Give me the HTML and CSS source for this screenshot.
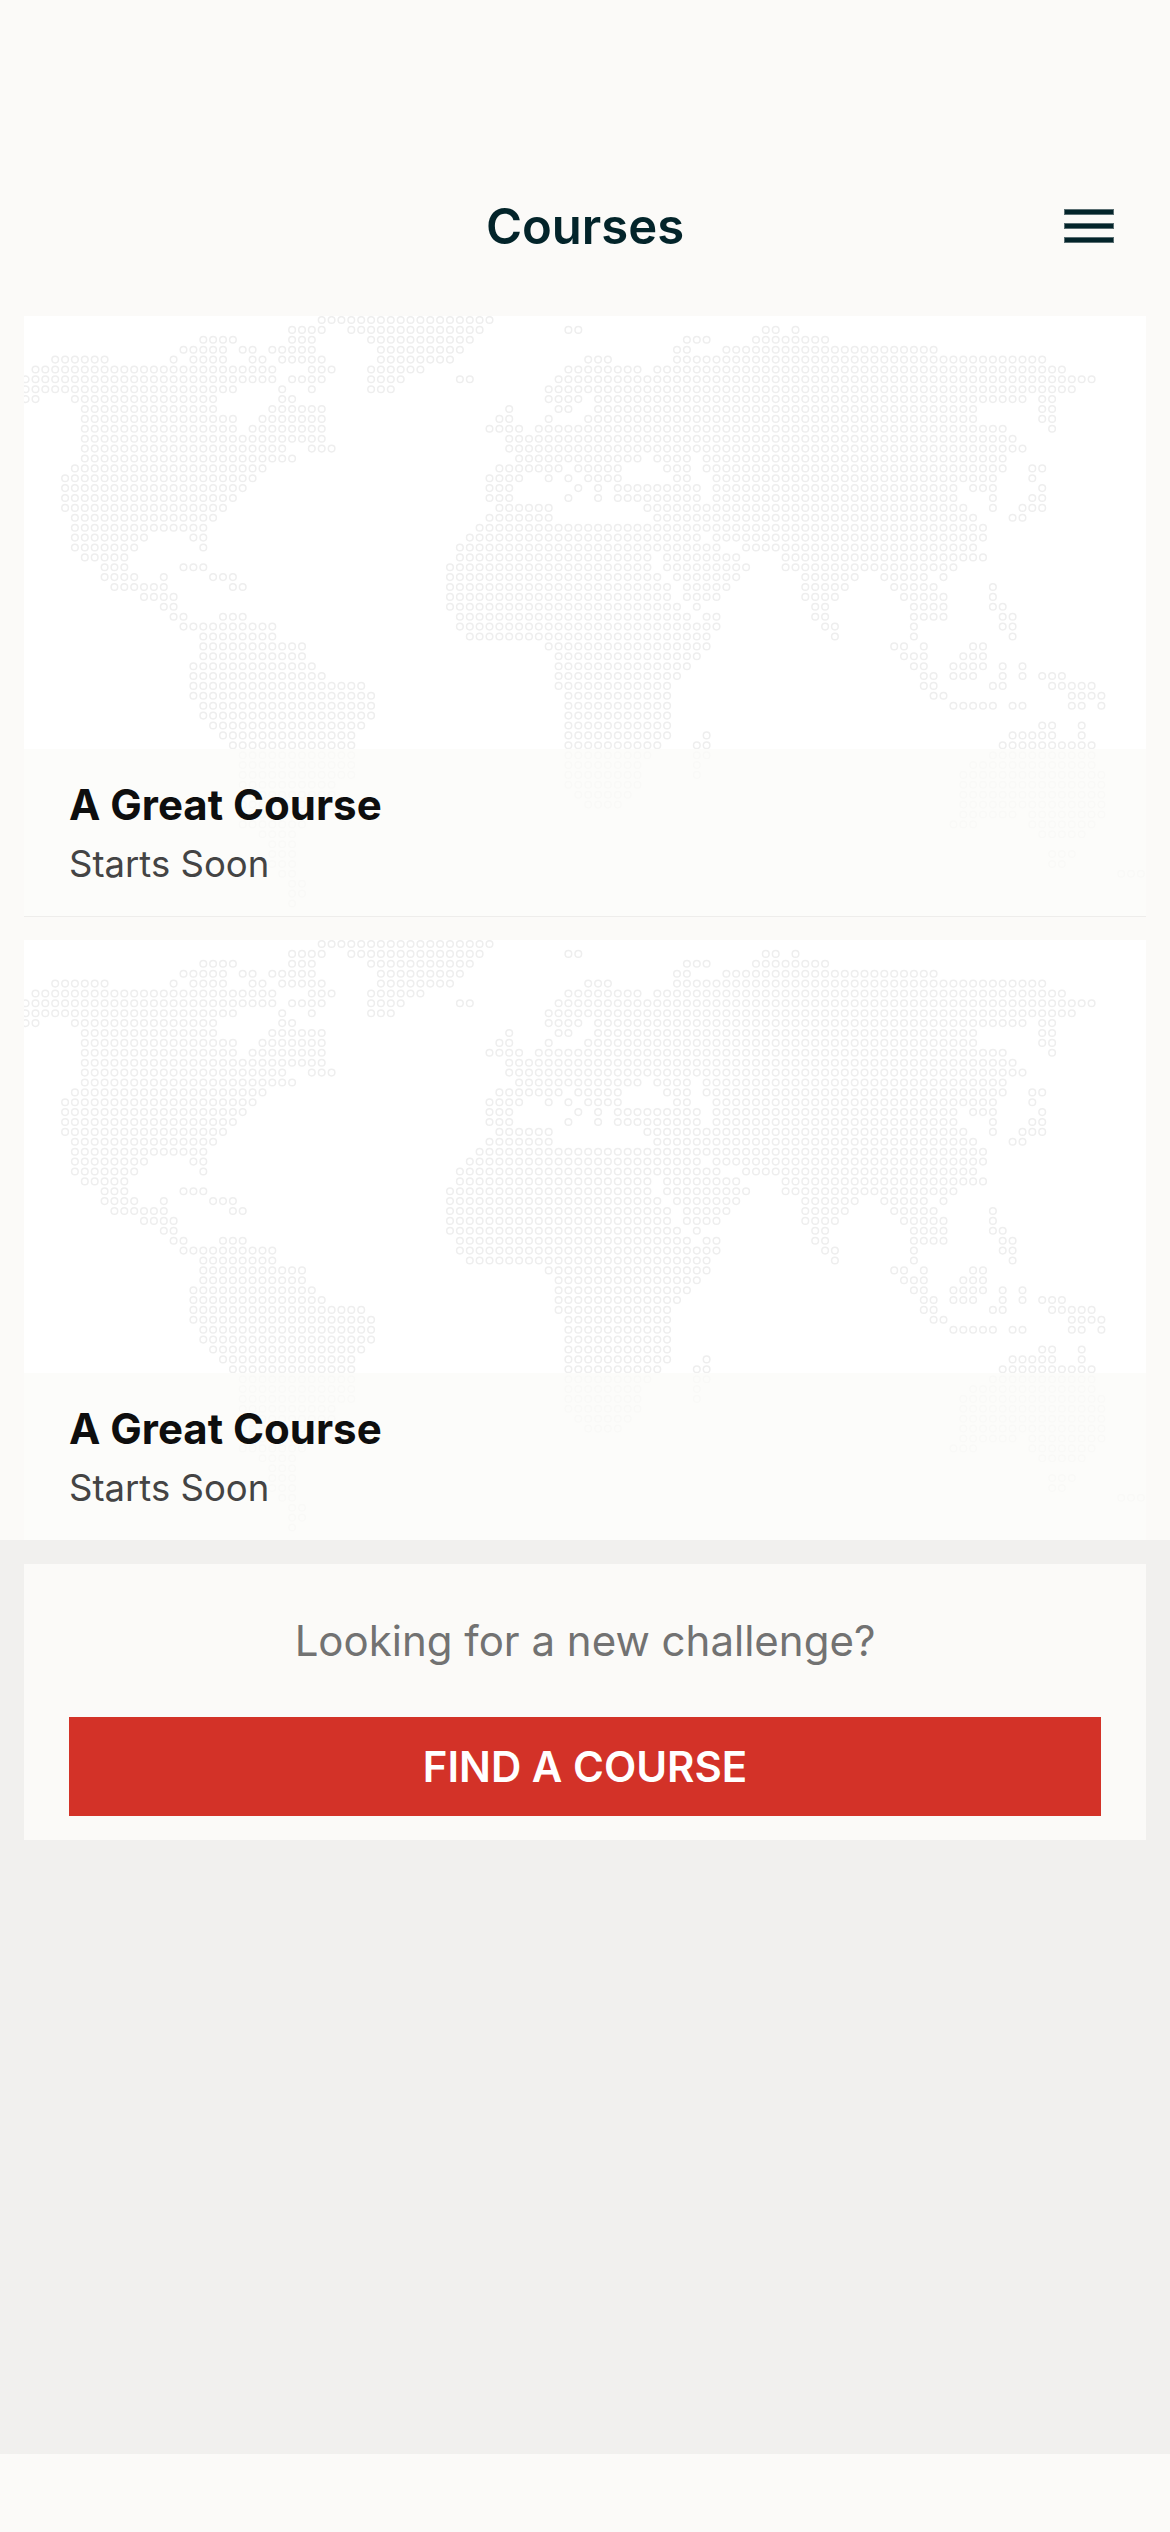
FILE: index.html
```html
<!DOCTYPE html>
<html lang="en">
<head>
    <meta charset="UTF-8">
    <meta name="viewport" content="width=device-width, initial-scale=1.0">
    <title>Courses</title>
    <link rel="stylesheet" href="styles.css">
</head>
<body>
    <div class="courses">
        <header class="topbar">
            <h1>Courses</h1>
            <button class="menu" aria-label="Menu">
                <span></span>
                <span></span>
                <span></span>
            </button>
        </header>

        <div class="course course-divided">
            <svg class="course-map" viewBox="0 0 1122 600"></svg>
            <div class="course-thumb"></div>
            <div class="course-info">
                <h2>A Great Course</h2>
                <p>Starts Soon</p>
            </div>
        </div>

        <div class="course">
            <svg class="course-map" viewBox="0 0 1122 600"></svg>
            <div class="course-thumb"></div>
            <div class="course-info">
                <h2>A Great Course</h2>
                <p>Starts Soon</p>
            </div>
        </div>
    </div>

    <main class="content">
        <section class="cta">
            <p>Looking for a new challenge?</p>
            <a class="cta-button" href="#">FIND A COURSE</a>
        </section>
    </main>

    <footer class="bottom"></footer>

    <script src="map.js"></script>
</body>
</html>
```

FILE: styles.css
```css
body {
    font-family: Inter, "Liberation Sans", sans-serif;
    display: flex;
    flex-direction: column;
    min-height: 100vh;
    margin: 0;
    background-color: #f1f0ee;
}

.courses {
    background: #fbfaf8;
}

.topbar {
    display: grid;
    grid-template-columns: 1fr auto 1fr;
    align-items: center;
    padding: 187px 56px 49px;
}

.topbar h1 {
    grid-column: 2;
    margin: 0;
    font-size: 49px;
    font-weight: 600;
    line-height: 80px;
    color: #03242a;
}

.menu {
    justify-self: end;
    display: flex;
    flex-direction: column;
    gap: 10px;
    box-sizing: border-box;
    width: 50px;
    margin-top: -2px;
    padding: 1px;
    border: 0;
    background: none;
}

.menu span {
    display: block;
    height: 4px;
    background: #03242a;
    box-shadow: 0 0 0 1px rgba(3, 36, 42, 0.65);
}

.course {
    position: relative;
    overflow: hidden;
    margin: 0 24px;
    background: #fff;
}

.course-divided {
    margin-bottom: 23px;
    border-bottom: 1px solid #eeedeb;
}

.course-map {
    position: absolute;
    top: 0;
    left: 0;
    width: 1122px;
    height: 600px;
    filter: blur(0.6px);
}

.course-map circle {
    fill: none;
    stroke: #eeeeee;
    stroke-width: 1.5;
}

.course-thumb {
    height: 433px;
}

.course-info {
    position: relative;
    padding: 31px 45px 30px;
    background: rgba(251, 251, 249, 0.82);
}

.course-info h2 {
    margin: 0 0 12px;
    font-size: 42px;
    font-weight: 700;
    line-height: 50px;
    color: #0e0e0e;
}

.course-info p {
    margin: 0;
    font-size: 36.5px;
    line-height: 44px;
    color: #444;
}

.content {
    flex: 1;
    padding: 24px;
}

.cta {
    padding: 47px 45px 24px;
    background: #fbfaf8;
    text-align: center;
}

.cta p {
    margin: 0 0 46px;
    font-size: 42px;
    line-height: 60px;
    color: #727272;
}

.cta-button {
    display: block;
    height: 99px;
    background: #d33228;
    font-size: 42px;
    font-weight: 600;
    line-height: 99px;
    color: #fff;
    text-decoration: none;
}

.bottom {
    height: 78px;
    background: #fbfaf8;
}
```

FILE: map.js
```js
// Dotted world map: one entry per row, each "from-to" is a run of columns
const mapRows = [
    "30-47",
    "27-30 33-46 55-56 75-76 78",
    "18-21 27-29 35-45 67-69 74-81",
    "16-20 22-23 25-29 36-44 66-67 71-92",
    "3-8 15 17-20 23-24 26-30 36-43 57-59 66-103",
    "1-25 29-31 35-40 55-62 64-105",
    "0-25 27-30 35-38 44-45 54-108",
    "0-21 26 29 35-37 53-106",
    "0-1 5-19 26-27 53-56 58-101 103-104",
    "6-19 25-30 49 54-55 58-96 103-104",
    "6-21 24-30 48-49 53 57-96 103-104",
    "6-21 23-30 47-50 52-99 104",
    "6-30 49-100",
    "6-26 29-31 49-101",
    "6-27 50-62 64-67 69-99",
    "5-24 48-54 56-60 65-67 69-99 102-103",
    "4-23 47-50 53 55 57-60 66-67 70-98 102",
    "4-22 47-49 56 58 60-68 70-94 96-98 103",
    "4-21 47-49 55 58 60-68 70-94 98 102-103",
    "4-20 48-53 63-95 98 101-103",
    "5-19 47-53 64-96 100-101",
    "5-18 46-97",
    "5-12 17-18 45-68 70-97",
    "5-11 18 44-63 64-70 73-96",
    "6-10 44-63 65-72 77-97",
    "8-10 16-18 43-63 65-73 77-94",
    "8-11 14 19-21 43-64 66-72 79-84 87-91 93",
    "9-14 21-22 43-65 67-71 79-83 88-92 98",
    "12-15 43-65 67-70 79-82 89-93 98",
    "14-15 43-66 68 80-81 90-93 98-99",
    "15-16 20-22 44-67 69-70 80-81 90-93 99-100",
    "16-25 44-70 81-82 90 99-100",
    "18-25 45-69 82 90 100",
    "18-28 53-69 88-89 91 96-97",
    "18-28 54-68 89-91 95-97",
    "17-29 54-67 90-91 94-97 99 101",
    "17-30 54-66 91-92 94-96 99 101 103-105",
    "17-34 54-65 91-92 98-99 104-108",
    "17-35 55-65 92-93 106-109",
    "18-35 55-65 94-98 100-101 106-107 109",
    "18-35 55-65",
    "19-34 55-65 103-104 107",
    "20-33 55-65 69 100-104 107",
    "21-33 55-64 68-69 99-108",
    "22-33 55-63 68-69 98-108",
    "22-33 55-62 68 96-108",
    "22-33 55-62 68 95-109",
    "22-31 55-62 95-109",
    "22-31 56-61 95-109",
    "22-30 57-60 95-109",
    "22-28 95-100 102-109",
    "22-28 94-96 102-108",
    "24-27 103-107",
    "25-27",
    "25-27 104-106",
    "25-27 104-105",
    "26-27 111-113",
    "27-28",
    "27-28",
    "27"
];

let dots = "";

mapRows.forEach(function (row, r) {
    row.split(" ").forEach(function (run) {
        const ends = run.split("-").map(Number);
        const last = ends.length > 1 ? ends[1] : ends[0];

        for (let c = ends[0]; c <= last; c++) {
            const x = (1.6 + c * 9.87).toFixed(1);
            const y = (4 + r * 9.89).toFixed(1);
            dots += `<circle cx="${x}" cy="${y}" r="3.3"></circle>`;
        }
    });
});

document.querySelectorAll(".course-map").forEach(function (svg) {
    svg.innerHTML = dots;
});
```
